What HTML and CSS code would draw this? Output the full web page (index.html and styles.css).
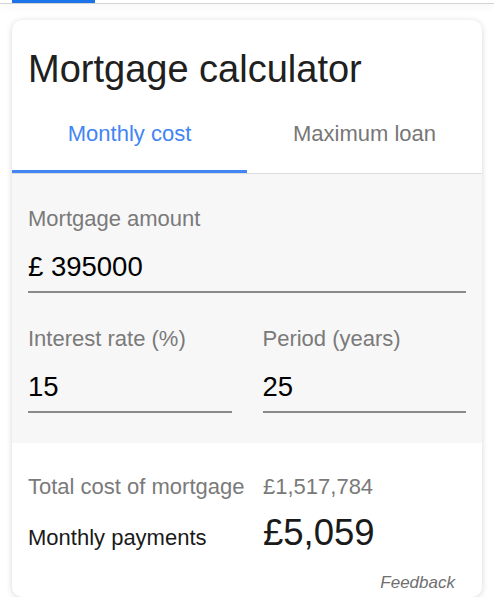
FILE: index.html
```html
<!DOCTYPE html>
<html lang="en">
<head>
  <meta charset="UTF-8" />
  <meta name="viewport" content="width=device-width, initial-scale=1.0"/>
  <title>Mortgage calculator</title>
  <link rel="stylesheet" href="styles.css">
</head>
<body>
  <div class="topbar"><div class="topbar-active"></div></div>

  <section class="card">
    <h1 class="card-title">Mortgage calculator</h1>

    <div class="tabs">
      <div class="tab active">Monthly cost</div>
      <div class="tab">Maximum loan</div>
    </div>

    <div class="inputs">
      <div class="field">
        <div class="field-label">Mortgage amount</div>
        <div class="field-value">£ 395000</div>
      </div>
      <div class="field-row">
        <div class="field">
          <div class="field-label">Interest rate (%)</div>
          <div class="field-value">15</div>
        </div>
        <div class="field">
          <div class="field-label">Period (years)</div>
          <div class="field-value">25</div>
        </div>
      </div>
    </div>

    <div class="results">
      <div class="result-label muted">Total cost of mortgage</div>
      <div class="result-value muted">£1,517,784</div>
      <div class="result-label">Monthly payments</div>
      <div class="result-value big">£5,059</div>
    </div>

    <div class="feedback">Feedback</div>
  </section>
</body>
</html>
```

FILE: styles.css
```css
body {
  margin: 0;
  padding: 0;
  background: #fff;
  font-family: "Liberation Sans", Arial, sans-serif;
  color: #1a1a1a;
  overflow: hidden;
}
.topbar {
  height: 3px;
  border-bottom: 1px solid #d4d4d4;
  box-shadow: 0 2px 10px rgba(0, 0, 0, 0.07);
}
.topbar-active {
  width: 83px;
  height: 3px;
  margin-left: 12px;
  background: #1a73e8;
}
.card {
  margin: 16px 12px 0;
  background: #fff;
  border-radius: 10px;
  box-shadow: 0 1px 6px rgba(0, 0, 0, 0.16);
  overflow: hidden;
}
.card-title {
  margin: 0;
  padding: 27px 16px 0;
  font-size: 38px;
  line-height: 44px;
  font-weight: normal;
  color: #202020;
}
.tabs {
  display: flex;
  border-bottom: 1px solid #dcdcdc;
}
.tab {
  flex: 1;
  text-align: center;
  padding: 30px 0 23px;
  font-size: 22px;
  line-height: 26px;
  color: #777;
  border-bottom: 3px solid transparent;
}
.tab.active {
  color: #4285f4;
  border-bottom-color: #4285f4;
}
.inputs {
  background: #f7f7f7;
  padding: 32px 16px 30px;
  display: flex;
  flex-direction: column;
  gap: 33px;
}
.field-row {
  display: grid;
  grid-template-columns: 1fr 1fr;
  gap: 31px;
}
.field-label {
  font-size: 22px;
  line-height: 26px;
  color: #7a7a7a;
}
.field-value {
  margin-top: 19px;
  font-size: 27.5px;
  line-height: 32px;
  color: #000;
  padding-bottom: 8px;
  border-bottom: 2px solid #8a8a8a;
}
.results {
  display: grid;
  grid-template-columns: 235px 1fr;
  row-gap: 12px;
  align-items: baseline;
  padding: 31px 16px 0;
}
.result-label,
.result-value {
  font-size: 22px;
  line-height: 26px;
}
.muted {
  color: #7a7a7a;
}
.result-value.big {
  font-size: 36.5px;
  line-height: 42px;
  color: #1a1a1a;
}
.feedback {
  text-align: right;
  padding: 19px 27px 4px 0;
  font-size: 17px;
  line-height: 20px;
  font-style: italic;
  color: #6f6f6f;
}
```
